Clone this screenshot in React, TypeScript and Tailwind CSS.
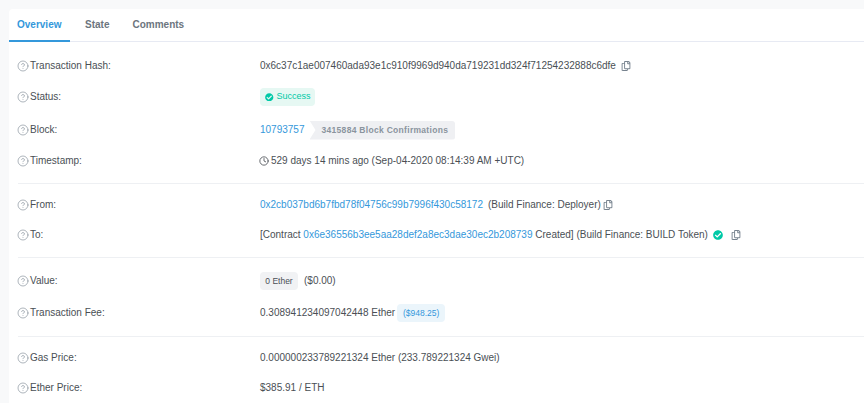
import type { ReactNode } from 'react';
import { CircleHelp, Clock } from 'lucide-react';
import { FaCheckCircle, FaRegCopy } from 'react-icons/fa';

const Row = ({ label, className, children }: { label: string; className: string; children: ReactNode }) => (
    <div className={`flex items-center h-[20px] ${className}`}>
        <div className="flex items-center w-[242px] shrink-0 text-[#4a4f55]">
            <CircleHelp size={12} strokeWidth={1.2} className="-ml-[1px] mr-[1px] text-[#77838f]" />
            <Txt>{label}</Txt>
        </div>
        <div className="flex items-center whitespace-nowrap text-[#4a4f55]">{children}</div>
    </div>
);

// body text sits 1px above the centre of its row
const Txt = ({ className = '', children }: { className?: string; children: ReactNode }) => (
    <span className={`pb-[2px] ${className}`}>{children}</span>
);

const Divider = ({ className }: { className: string }) => <div className={`h-px bg-[#eef0f3] ${className}`} />;

const Link = ({ children }: { children: ReactNode }) => <Txt className="text-[#3498db]">{children}</Txt>;

const App = () => {
    return (
        <div className="h-[403px] w-[864px] overflow-hidden bg-[#f8f9fa] pl-[9px] pt-[9px] font-['Liberation_Sans',Arial,sans-serif] text-[10px]">
            <div className="h-[394px] bg-white rounded-tl-[4px]">
                <div className="flex h-[33px] border-b border-[#e7eaf3] font-bold text-[#6c757e]">
                    <div className="flex items-center h-[33px] w-[61px] pl-[8px] pb-[1px] border-b-2 border-[#3498db] text-[#3498db]">Overview</div>
                    <div className="flex items-center ml-[15px] pb-[1px]">State</div>
                    <div className="flex items-center ml-[23px] pb-[1px]">Comments</div>
                </div>

                <div className="pl-[9px] pt-[14px]">
                    <Row label="Transaction Hash:" className="">
                        <Txt>0x6c37c1ae007460ada93e1c910f9969d940da719231dd324f71254232888c6dfe</Txt>
                        <FaRegCopy size={10} className="ml-[5px] text-[#77838f]" />
                    </Row>
                    <Row label="Status:" className="mt-[11px]">
                        <span className="flex items-center h-[18px] w-[55px] pl-[5px] rounded-[4px] bg-[#e6f8f3] text-[9px] text-[#00c9a7]">
                            <FaCheckCircle size={8.5} className="mr-[3px]" />
                            Success
                        </span>
                    </Row>
                    <Row label="Block:" className="mt-[13px]">
                        <Link>10793757</Link>
                        <span className="ml-[5px] flex items-center h-[19px] pl-[12px] pr-[7px] rounded-r-[3px] bg-[#eff0f3] text-[8.5px] font-bold tracking-[0.3px] text-[#8a949e] [clip-path:polygon(0_0,100%_0,100%_100%,0_100%,6px_50%)]">
                            3415884 Block Confirmations
                        </span>
                    </Row>
                    <Row label="Timestamp:" className="mt-[11px]">
                        <Clock size={10} strokeWidth={2} className="-ml-[1px] mr-[2px]" />
                        <Txt>529 days 14 mins ago (Sep-04-2020 08:14:39 AM +UTC)</Txt>
                    </Row>

                    <Divider className="mt-[12px]" />

                    <Row label="From:" className="mt-[11px]">
                        <Link>0x2cb037bd6b7fbd78f04756c99b7996f430c58172</Link>
                        <Txt className="ml-[5px]">(Build Finance: Deployer)</Txt>
                        <FaRegCopy size={10} className="ml-[2px] text-[#77838f]" />
                    </Row>
                    <Row label="To:" className="mt-[10px]">
                        <Txt>[Contract&nbsp;</Txt>
                        <Link>0x6e36556b3ee5aa28def2a8ec3dae30ec2b208739</Link>
                        <Txt>&nbsp;Created] (Build Finance: BUILD Token)</Txt>
                        <FaCheckCircle size={10} className="ml-[5px] text-[#00c9a7]" />
                        <FaRegCopy size={10} className="ml-[8px] text-[#77838f]" />
                    </Row>

                    <Divider className="mt-[12px]" />

                    <Row label="Value:" className="mt-[13px]">
                        <span className="flex items-center h-[18px] w-[38px] justify-center rounded-[4px] bg-[#f1f2f4] text-[8.5px]">0 Ether</span>
                        <Txt className="ml-[6px]">($0.00)</Txt>
                    </Row>
                    <Row label="Transaction Fee:" className="mt-[12px]">
                        <Txt>0.308941234097042448 Ether</Txt>
                        <span className="ml-[2px] flex items-center h-[18px] w-[48px] justify-center rounded-[4px] bg-[#ebf5fb] text-[8.5px] text-[#3498db]">($948.25)</span>
                    </Row>

                    <Divider className="mt-[13px]" />

                    <Row label="Gas Price:" className="mt-[11px]">
                        <Txt>0.000000233789221324 Ether (233.789221324 Gwei)</Txt>
                    </Row>
                    <Row label="Ether Price:" className="mt-[10px]">
                        <Txt>$385.91 / ETH</Txt>
                    </Row>
                </div>
            </div>
        </div>
    );
};

export default App;
